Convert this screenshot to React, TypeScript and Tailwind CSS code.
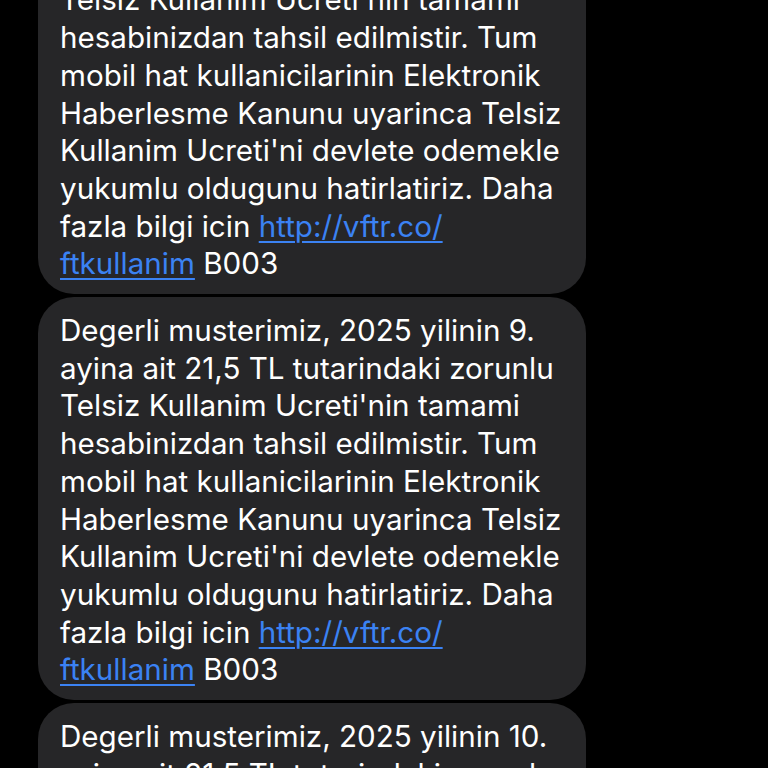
const LINES = (month: string) => [
  `Degerli musterimiz, 2025 yilinin ${month}.`,
  "ayina ait 21,5 TL tutarindaki zorunlu",
  "Telsiz Kullanim Ucreti'nin tamami",
  "hesabinizdan tahsil edilmistir. Tum",
  "mobil hat kullanicilarinin Elektronik",
  "Haberlesme Kanunu uyarinca Telsiz",
  "Kullanim Ucreti'ni devlete odemekle",
  "yukumlu oldugunu hatirlatiriz. Daha",
];

function Bubble({ month, className = "" }: { month: string; className?: string }) {
  return (
    <div
      className={`w-[548px] ml-[38px] rounded-[36px] bg-[#262628] px-[22px] pt-[15px] pb-[11px] text-white text-[29.6px] leading-[37.7px] ${className}`}
    >
      {LINES(month).map((l) => (
        <div key={l} className="whitespace-nowrap">{l}</div>
      ))}
      <div className="whitespace-nowrap">
        fazla bilgi icin{" "}
        <span className="text-[#3b82f3] underline decoration-2 underline-offset-4">http://vftr.co/</span>
      </div>
      <div className="whitespace-nowrap">
        <span className="text-[#3b82f3] underline decoration-2 underline-offset-4">ftkullanim</span> B003
      </div>
    </div>
  );
}

export default function App() {
  return (
    <div
      className="h-[768px] w-[768px] overflow-hidden bg-black flex flex-col gap-[3px]"
      style={{ fontFamily: "Inter, 'Noto Sans', sans-serif" }}
    >
      <Bubble month="8" className="mt-[-109px] shrink-0" />
      <Bubble month="9" className="shrink-0" />
      <Bubble month="10" className="shrink-0" />
    </div>
  );
}
